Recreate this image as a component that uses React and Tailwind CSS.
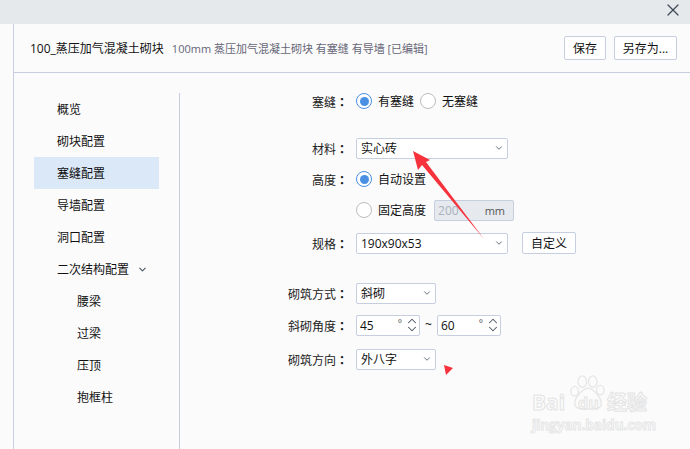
import { X, ChevronDown, ChevronUp } from "lucide-react";

const sideItems = [
  { label: "概览" },
  { label: "砌块配置" },
  { label: "塞缝配置", active: true },
  { label: "导墙配置" },
  { label: "洞口配置" },
  { label: "二次结构配置", caret: true },
  { label: "腰梁", sub: true },
  { label: "过梁", sub: true },
  { label: "压顶", sub: true },
  { label: "抱框柱", sub: true },
];

const Label = ({ children }) => (
  <div className="w-[168px] shrink-0 mr-2 pt-[2px] text-right text-[12px] leading-none whitespace-nowrap text-[#222]">
    {children}
    {children && <span className="font-['Noto_Sans_CJK_TC',sans-serif] font-bold">：</span>}
  </div>
);

const Select = ({ value, width }) => (
  <div
    className={`${width} h-[21px] flex items-center justify-between pl-1 pr-[3px] bg-white border border-[#c5cfe0] rounded-[2px] text-[12px] text-[#111]`}
  >
    <span className="pt-[2px]">{value}</span>
    <ChevronDown size={10} strokeWidth={2.2} className="text-[#5b6675]" />
  </div>
);

const Radio = ({ checked }) => (
  <span
    className={`w-4 h-4 rounded-full flex items-center justify-center bg-white border ${
      checked ? "border-[#4a90e2]" : "border-[#bdbdbd]"
    }`}
  >
    {checked && <span className="w-[9px] h-[9px] rounded-full bg-[#4a90e2]" />}
  </span>
);

const NumberBox = ({ value }) => (
  <div className="w-16 h-[21px] flex items-center bg-white border border-[#c5cfe0] rounded-[2px] pl-[3px] text-[12px] text-[#111]">
    <span className="flex-1 pt-[2px]">{value}</span>
    <span className="text-[10px] leading-none text-[#555] mb-1 mr-[3px]">°</span>
    <div className="flex flex-col items-center text-[#4b5563]">
      <ChevronUp size={14} strokeWidth={1.8} className="-mb-[3px]" />
      <ChevronDown size={14} strokeWidth={1.8} className="-mt-[3px]" />
    </div>
  </div>
);

const App = () => {
  return (
    <div className="relative w-[690px] h-[449px] overflow-hidden flex flex-col bg-[#fbfbfb] font-['Open_Sans','Noto_Sans_CJK_SC',sans-serif]">
      {/* Title bar */}
      <div className="h-6 shrink-0 bg-[#e6e9ec] flex items-center justify-end pr-[7px] pb-1">
        <X size={20} strokeWidth={1.5} className="text-[#3f4a56]" />
      </div>

      <div className="flex-1 ml-[13px] border-l border-[#c5cfe0] flex flex-col">
        {/* Header */}
        <div className="h-[49px] shrink-0 border-b border-[#c5cfe0] flex items-center pl-4 pr-[13px]">
          <span className="pt-[2px] text-[12px] text-[#111]">100_蒸压加气混凝土砌块</span>
          <span className="ml-2 pt-[2px] text-[11px] text-[#667]">100mm 蒸压加气混凝土砌块 有塞缝 有导墙 [已编辑]</span>
          <button className="ml-auto w-[42px] h-6 pt-[2px] bg-white border border-[#c5cfe0] rounded-[2px] text-[12px] text-[#111]">保存</button>
          <button className="ml-2 w-[63px] h-6 pt-[2px] bg-white border border-[#c5cfe0] rounded-[2px] text-[12px] text-[#111]">另存为...</button>
        </div>

        <div className="flex-1 flex">
          {/* Sidebar */}
          <div className="w-[166px] shrink-0 mt-5 border-r border-[#c5cfe0] pr-5 pl-5">
            {sideItems.map((item) => (
              <div
                key={item.label}
                className={`h-8 flex items-center text-[12px] text-[#111] ${item.sub ? "pl-[43px]" : "pl-[23px]"} ${
                  item.active ? "bg-[#dbe8f8]" : ""
                }`}
              >
                <span className="pt-[2px]">{item.label}</span>
                {item.caret && <ChevronDown size={11} strokeWidth={2.4} className="ml-2 text-[#4b5563]" />}
              </div>
            ))}
          </div>

          {/* Form */}
          <div className="flex-1 flex flex-col pt-[17px]">
            <div className="h-[22px] flex items-center">
              <Label>塞缝</Label>
              <Radio checked />
              <span className="ml-1.5 pt-[2px] text-[12px] text-[#111]">有塞缝</span>
              <span className="ml-1.5"><Radio /></span>
              <span className="ml-1.5 pt-[2px] text-[12px] text-[#111]">无塞缝</span>
            </div>

            <div className="mt-[25px] h-[22px] flex items-center">
              <Label>材料</Label>
              <Select value="实心砖" width="w-[152px]" />
            </div>

            <div className="mt-[9px] h-[22px] flex items-center">
              <Label>高度</Label>
              <Radio checked />
              <span className="ml-1.5 pt-[2px] text-[12px] text-[#111]">自动设置</span>
            </div>

            <div className="mt-[9px] h-[22px] flex items-center">
              <Label></Label>
              <Radio />
              <span className="ml-1.5 pt-[2px] text-[12px] text-[#111]">固定高度</span>
              <div className="ml-2 w-20 h-[21px] flex items-center justify-between pl-[3px] pr-2 bg-[#e6e9ee] border border-[#c5cfe0] rounded-[2px] text-[12px]">
                <span className="pt-[2px] text-[#a9b1bd]">200</span>
                <span className="pt-[2px] text-[11px] text-[#555]">mm</span>
              </div>
            </div>

            <div className="mt-[11px] h-[22px] flex items-center">
              <Label>规格</Label>
              <Select value="190x90x53" width="w-[152px]" />
              <button className="ml-[14px] w-[54px] h-[22px] pt-[2px] bg-white border border-[#c5cfe0] rounded-[2px] text-[12px] text-[#111]">自定义</button>
            </div>

            <div className="mt-[28px] h-[22px] flex items-center">
              <Label>砌筑方式</Label>
              <Select value="斜砌" width="w-20" />
            </div>

            <div className="mt-[10px] h-[22px] flex items-center">
              <Label>斜砌角度</Label>
              <NumberBox value="45" />
              <span className="w-[17px] text-center text-[12px] text-[#111]">~</span>
              <NumberBox value="60" />
            </div>

            <div className="mt-[12px] h-[22px] flex items-center">
              <Label>砌筑方向</Label>
              <Select value="外八字" width="w-20" />
            </div>
          </div>
        </div>
      </div>

      {/* Red annotation arrows */}
      <svg className="absolute left-0 top-0 pointer-events-none" width="690" height="449">
        <polygon points="413,151 430,160 426,162 484,239 422,165 418,170" fill="#f6323c" />
        <polygon points="444,365 453,368 446,375" fill="#f6323c" />
      </svg>

      {/* Baidu watermark */}
      <div className="absolute left-[528px] top-[375px] w-[125px] h-[60px] pointer-events-none">
        <svg className="absolute left-[41px] top-0" width="38" height="38" viewBox="0 0 40 40" fill="#fbfbfb" stroke="#e6e6e6" strokeWidth="1.4">
          <ellipse cx="6" cy="17" rx="4" ry="5" />
          <ellipse cx="14" cy="7" rx="4.5" ry="6" />
          <ellipse cx="25" cy="7" rx="4.5" ry="6" />
          <ellipse cx="33" cy="16" rx="4" ry="5" />
          <path d="M20 14c6 0 14 10 14 16 0 5-5 6-14 6S6 35 6 30c0-6 8-16 14-16z" />
        </svg>
        <span className="absolute left-[4px] top-[17px] text-[21px] leading-none font-bold text-[#fbfbfb] [-webkit-text-stroke:1px_#e4e4e4]">Bai</span>
        <span className="absolute left-[50px] top-[20px] text-[16px] leading-none font-bold text-[#fbfbfb] [-webkit-text-stroke:1px_#e4e4e4]">du</span>
        <span className="absolute left-[79px] top-[18px] text-[20px] leading-none font-bold text-[#fbfbfb] [-webkit-text-stroke:1px_#e4e4e4]">经验</span>
        <span className="absolute left-[4px] top-[44px] text-[13.5px] leading-none font-bold whitespace-nowrap text-[#fbfbfb] [-webkit-text-stroke:1px_#e6e6e6]">jingyan.baidu.com</span>
      </div>
    </div>
  );
};

export default App;
